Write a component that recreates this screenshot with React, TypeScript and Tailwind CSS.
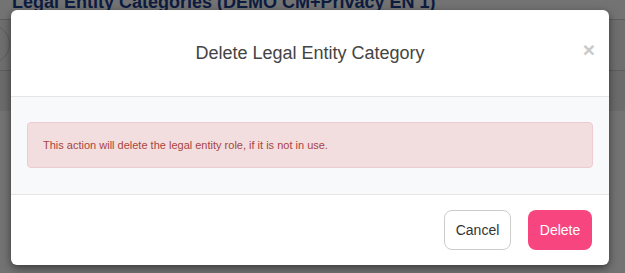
export default function App() {
  return (
    <div className="relative h-[273px] w-[625px] overflow-hidden bg-white font-['Liberation_Sans',Arial,sans-serif]">
      {/* page behind the dialog */}
      <div className="flex flex-col">
        <h1 className="-mt-[9px] pl-[12px] text-[18px] font-bold leading-[22px] text-[#1b3f8f]">
          Legal Entity Categories (DEMO CM+Privacy EN 1)
        </h1>
        <div className="mt-[6px] h-[52px] border-y border-[#cfcfcf] bg-[#f4f4f4]">
          <div className="-ml-[30px] mt-[4px] h-[40px] w-[40px] rounded-full border border-[#d0d0d0]" />
        </div>
        <div className="h-[40px] bg-[#eeeeee]" />
      </div>

      {/* backdrop */}
      <div className="absolute inset-0 bg-black/55 pl-[11px] pr-[16px] pt-[10px]">
        <div className="overflow-hidden rounded-[6px] bg-white shadow-[0_3px_9px_rgba(0,0,0,0.5)]">
          <div className="relative flex h-[87px] items-center justify-center border-b border-[#e5e5e5]">
            <h2 className="text-[18px] leading-none text-[#444]">Delete Legal Entity Category</h2>
            <button className="absolute right-[14px] top-[29px] text-[21px] font-bold leading-none text-[#c9c9c9]">
              ×
            </button>
          </div>
          <div className="border-b border-[#e5e5e5] bg-[#f8f9fb] px-[16px] pb-[26px] pt-[25px]">
            <div className="rounded-[4px] border border-[#ebccd1] bg-[#f2dede] px-[15px] py-[15px] text-[11px] leading-[14px] text-[#a94442]">
              This action will delete the legal entity role, if it is not in use.
            </div>
          </div>
          <div className="flex h-[70px] items-center justify-end gap-[17px] pr-[17px]">
            <button className="h-[40px] w-[67px] rounded-[8px] border border-[#cccccc] bg-white text-[14px] text-[#333]">
              Cancel
            </button>
            <button className="h-[40px] w-[64px] rounded-[8px] bg-[#f7467f] text-[14px] text-white">
              Delete
            </button>
          </div>
        </div>
      </div>
    </div>
  );
}
